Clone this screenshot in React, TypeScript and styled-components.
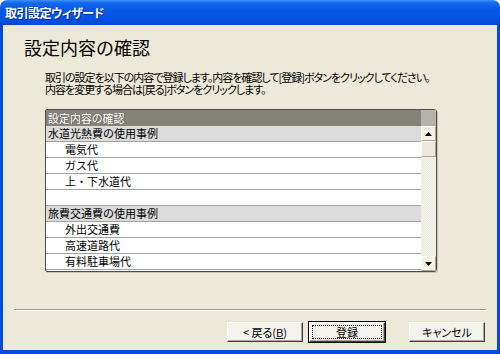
import React from "react";
import styled, { createGlobalStyle } from "styled-components";

const GlobalStyle = createGlobalStyle`
  html, body {
    margin: 0;
    padding: 0;
    background: #ffffff;
  }
  body {
    font-family: "Noto Sans CJK JP", "Noto Sans", sans-serif;
  }
`;

const Window = styled.div`
  width: 500px;
  height: 354px;
  display: flex;
  flex-direction: column;
  overflow: hidden;
`;

const TitleBar = styled.div`
  height: 25px;
  flex: none;
  display: flex;
  align-items: center;
  padding-left: 5px;
  border-radius: 7px 7px 0 0;
  background: linear-gradient(
    to bottom,
    #3d8ff8 0%,
    #1466ee 12%,
    #0757e6 40%,
    #0453e2 75%,
    #0246d2 100%
  );
  color: #ffffff;
  font-size: 12px;
  font-weight: bold;
  letter-spacing: -0.5px;
  font-feature-settings: "palt";
  text-shadow: 1px 1px #0b2a9c;
`;

const Frame = styled.div`
  flex: 1;
  display: flex;
  flex-direction: column;
  background: #ece9d8;
  border: solid #0848dc;
  border-width: 0 3px 4px 3px;
  color: #000000;
`;

const Heading = styled.h1`
  margin: 11px 0 0 21px;
  font-size: 18px;
  line-height: 22px;
  font-weight: normal;
`;

const Description = styled.p`
  margin: 13px 0 0 42px;
  font-size: 11px;
  line-height: 12px;
  letter-spacing: -1px;
  font-feature-settings: "palt";
  white-space: pre-line;
`;

const ListBox = styled.div`
  margin: 14px 0 0 42px;
  width: 392px;
  height: 163px;
  box-sizing: border-box;
  display: flex;
  border: 1px solid #4e4d48;
  border-radius: 2px 3px 3px 2px;
  box-shadow: 1px 1px 0 #c9c6b6;
  background: #ffffff;
  overflow: hidden;
`;

const ListContent = styled.div`
  flex: 1;
  display: flex;
  flex-direction: column;
`;

const HeaderCell = styled.div`
  height: 16px;
  flex: none;
  background: #85827a;
  color: #ffffff;
  font-size: 11px;
  line-height: 16px;
  padding-left: 2px;
  font-feature-settings: "palt";
  text-shadow: 1px 0 0 #5a5852;
`;

const Row = styled.div<{ $group?: boolean }>`
  height: 15px;
  flex: none;
  border-bottom: 1px solid #a4a4a4;
  background: ${(p) => (p.$group ? "#dcdbdc" : "#ffffff")};
  padding-left: ${(p) => (p.$group ? 2 : 19)}px;
  font-size: 11px;
  line-height: 15px;
  white-space: nowrap;
`;

const ScrollBar = styled.div`
  width: 15px;
  flex: none;
  display: flex;
  flex-direction: column;
  background-color: #f5f4ee;
  background-image: conic-gradient(
    #ecebe3 25%,
    transparent 0 50%,
    #ecebe3 0 75%,
    transparent 0
  );
  background-size: 2px 2px;
`;

const ScrollCorner = styled.div`
  height: 16px;
  flex: none;
  background: #b5b3ab;
`;

const ScrollButton = styled.div`
  height: 15px;
  flex: none;
  box-sizing: border-box;
  display: flex;
  align-items: center;
  justify-content: center;
  background: #f3f1e8;
  border: 1px solid;
  border-color: #ffffff #a8a594 #a8a594 #ffffff;
`;

const Thumb = styled.div`
  height: 16px;
  box-sizing: border-box;
  background: #ece9dc;
  border: 1px solid;
  border-color: #ffffff #a8a594 #a8a594 #ffffff;
`;

const Track = styled.div`
  flex: 1;
`;

const Separator = styled.div`
  margin: 37px 11px 0 11px;
  height: 1px;
  background: #9d9b8e;
  border-bottom: 1px solid #ffffff;
`;

const ButtonRow = styled.div`
  margin: 11px 12px 0 0;
  display: flex;
  justify-content: flex-end;
`;

const Button = styled.button<{ $focused?: boolean; $gap?: number }>`
  width: 76px;
  height: 20px;
  box-sizing: border-box;
  margin-left: ${(p) => p.$gap ?? 0}px;
  padding: 0;
  position: relative;
  font-family: "Noto Sans CJK JP", "Noto Sans", sans-serif;
  font-size: 11px;
  line-height: 16px;
  font-feature-settings: "palt";
  color: #000000;
  background: #f4f3ee;
  border: 1px solid;
  border-color: #ffffff #404040 #404040 #ffffff;
  box-shadow: ${(p) =>
    p.$focused
      ? "0 0 0 1px #000000, inset -1px -1px 0 #aca899"
      : "inset -1px -1px 0 #aca899"};
  &::after {
    content: "";
    display: ${(p) => (p.$focused ? "block" : "none")};
    position: absolute;
    inset: 2px;
    border: 1px dotted #000000;
  }
`;

const Under = styled.span`
  text-decoration: underline;
`;

const Arrow = ({ up }: { up?: boolean }) => (
  <svg width="7" height="4" viewBox="0 0 7 4">
    <path d={up ? "M3.5 0 L7 4 L0 4 Z" : "M0 0 L7 0 L3.5 4 Z"} fill="#000" />
  </svg>
);

const rows: { text: string; group?: boolean }[] = [
  { text: "水道光熱費の使用事例", group: true },
  { text: "電気代" },
  { text: "ガス代" },
  { text: "上・下水道代" },
  { text: "" },
  { text: "旅費交通費の使用事例", group: true },
  { text: "外出交通費" },
  { text: "高速道路代" },
  { text: "有料駐車場代" },
];

export default function App() {
  return (
    <>
      <GlobalStyle />
      <Window>
        <TitleBar>取引設定ウィザード</TitleBar>
        <Frame>
          <Heading>設定内容の確認</Heading>
          <Description>
            {"取引の設定を以下の内容で登録します。内容を確認して[登録]ボタンをクリックしてください。\n内容を変更する場合は[戻る]ボタンをクリックします。"}
          </Description>
          <ListBox>
            <ListContent>
              <HeaderCell>設定内容の確認</HeaderCell>
              {rows.map((r, i) => (
                <Row key={i} $group={r.group}>
                  {r.text}
                </Row>
              ))}
            </ListContent>
            <ScrollBar>
              <ScrollCorner />
              <ScrollButton>
                <Arrow up />
              </ScrollButton>
              <Thumb />
              <Track />
              <ScrollButton>
                <Arrow />
              </ScrollButton>
            </ScrollBar>
          </ListBox>
          <Separator />
          <ButtonRow>
            <Button>
              &lt;&nbsp;戻る(<Under>B</Under>)
            </Button>
            <Button $focused $gap={6}>
              登録
            </Button>
            <Button $gap={24}>キャンセル</Button>
          </ButtonRow>
        </Frame>
      </Window>
    </>
  );
}
